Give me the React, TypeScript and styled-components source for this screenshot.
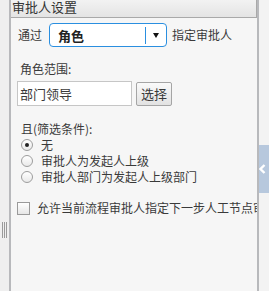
import React from "react";
import styled, { createGlobalStyle } from "styled-components";

const Global = createGlobalStyle`
  html, body { margin: 0; padding: 0; }
  body {
    width: 269px; height: 291px; overflow: hidden;
    font-family: "Noto Sans CJK SC", "Microsoft YaHei", sans-serif;
    font-size: 12px; color: #3a3a3a; background: #f0f0f0;
  }
`;

const Frame = styled.div`
  display: flex;
  width: 269px;
  height: 291px;
`;

const LeftStrip = styled.div`
  width: 9px;
  background: #efefef;
  display: flex;
  flex-direction: column;
  padding-top: 222px;
  box-sizing: border-box;
  align-items: center;
`;

const Grip = styled.div`
  width: 5px;
  height: 16px;
  background: repeating-linear-gradient(to right, #9a9a9a 0 1px, transparent 1px 2px);
`;

const Panel = styled.div`
  flex: 1;
  border-left: 2px solid #b8b9bc;
  border-right: 2px solid #b8b9bc;
  background: #f6f6f6;
  display: flex;
  flex-direction: column;
  min-width: 0;
  overflow: hidden;
`;

const Header = styled.div`
  height: 17px;
  flex-shrink: 0;
  background: linear-gradient(#f2f2f2, #e4e4e4);
  border-bottom: 1px solid #a9a9a9;
  border-right: 1px solid #a9a9a9;
  padding-left: 1px;
  font-size: 13px;
  line-height: 13px;
  color: #333;
  white-space: nowrap;
`;

const Body = styled.div`
  display: flex;
  flex-direction: column;
  padding: 5px 0 0 6px;
`;

const Row = styled.div<{ $mt?: number }>`
  display: flex;
  align-items: center;
  margin-top: ${(p) => p.$mt ?? 0}px;
  white-space: nowrap;
`;

const Text = styled.span<{ $ml?: number }>`
  margin-left: ${(p) => p.$ml ?? 0}px;
  line-height: 16px;
`;

const Select = styled.div`
  margin-left: 7px;
  width: 118px;
  height: 24px;
  box-sizing: border-box;
  border: 1px solid #2a8fe0;
  border-radius: 4px;
  background: #fff;
  display: flex;
  align-items: center;
`;

const SelectValue = styled.span`
  flex: 1;
  padding-left: 8px;
  font-weight: bold;
  font-size: 13px;
  color: #222;
`;

const Divider = styled.span`
  width: 1px;
  height: 17px;
  background: #2a8fe0;
`;

const ArrowBox = styled.span`
  width: 20px;
  display: flex;
  justify-content: center;
`;

const Arrow = styled.span`
  width: 0;
  height: 0;
  border-left: 3.5px solid transparent;
  border-right: 3.5px solid transparent;
  border-top: 5px solid #111;
`;

const Input = styled.div`
  width: 115px;
  height: 25px;
  box-sizing: border-box;
  border: 1px solid #c6c6c6;
  background: #fff;
  display: flex;
  align-items: center;
  padding-left: 2px;
  font-size: 13px;
`;

const Button = styled.div`
  margin-left: 4px;
  width: 36px;
  height: 24px;
  box-sizing: border-box;
  border: 1px solid #a5a5a5;
  border-radius: 2px;
  background: linear-gradient(#fafafa, #e2e2e2);
  display: flex;
  align-items: center;
  justify-content: center;
  font-size: 13px;
`;

const RadioRow = styled.div`
  display: flex;
  align-items: center;
  height: 16px;
  padding-left: 4px;
  white-space: nowrap;
`;

const RadioCircle = styled.span<{ $checked?: boolean }>`
  width: 12px;
  height: 12px;
  box-sizing: border-box;
  border-radius: 50%;
  border: 1px solid #9d9d9d;
  background: linear-gradient(#ffffff, #e9e9e9);
  display: flex;
  align-items: center;
  justify-content: center;
  flex-shrink: 0;
  &::after {
    content: "";
    display: ${(p) => (p.$checked ? "block" : "none")};
    width: 4px;
    height: 4px;
    border-radius: 50%;
    background: #222;
  }
`;

const Checkbox = styled.span`
  width: 13px;
  height: 13px;
  box-sizing: border-box;
  border: 1px solid #9a9a9a;
  background: linear-gradient(#ffffff, #e6e6e6);
  flex-shrink: 0;
`;

const RightStrip = styled.div`
  width: 10px;
  background: #f3f3f3;
  display: flex;
  flex-direction: column;
  padding-top: 145px;
  box-sizing: border-box;
`;

const Tab = styled.div`
  height: 48px;
  background: #b7c8dd;
  display: flex;
  align-items: center;
  justify-content: flex-start;
`;

export default function App() {
  return (
    <>
      <Global />
      <Frame>
        <LeftStrip>
          <Grip />
        </LeftStrip>
        <Panel>
          <Header>审批人设置</Header>
          <Body>
            <Row>
              <Text $ml={1}>通过</Text>
              <Select>
                <SelectValue>角色</SelectValue>
                <Divider />
                <ArrowBox>
                  <Arrow />
                </ArrowBox>
              </Select>
              <Text $ml={5}>指定审批人</Text>
            </Row>
            <Row $mt={14}>
              <Text $ml={3}>角色范围:</Text>
            </Row>
            <Row $mt={4}>
              <Input>部门领导</Input>
              <Button>选择</Button>
            </Row>
            <Row $mt={15}>
              <Text $ml={4}>且(筛选条件):</Text>
            </Row>
            <RadioRow>
              <RadioCircle $checked />
              <Text $ml={8}>无</Text>
            </RadioRow>
            <RadioRow>
              <RadioCircle />
              <Text $ml={8}>审批人为发起人上级</Text>
            </RadioRow>
            <RadioRow>
              <RadioCircle />
              <Text $ml={8}>审批人部门为发起人上级部门</Text>
            </RadioRow>
            <Row $mt={15}>
              <Checkbox />
              <Text $ml={7}>允许当前流程审批人指定下一步人工节点审批人</Text>
            </Row>
          </Body>
        </Panel>
        <RightStrip>
          <Tab>
            <svg width="7" height="10" viewBox="0 0 7 10">
              <path d="M5.5 1 L1.5 5 L5.5 9" stroke="#fff" strokeWidth="2.4" fill="none" />
            </svg>
          </Tab>
        </RightStrip>
      </Frame>
    </>
  );
}
